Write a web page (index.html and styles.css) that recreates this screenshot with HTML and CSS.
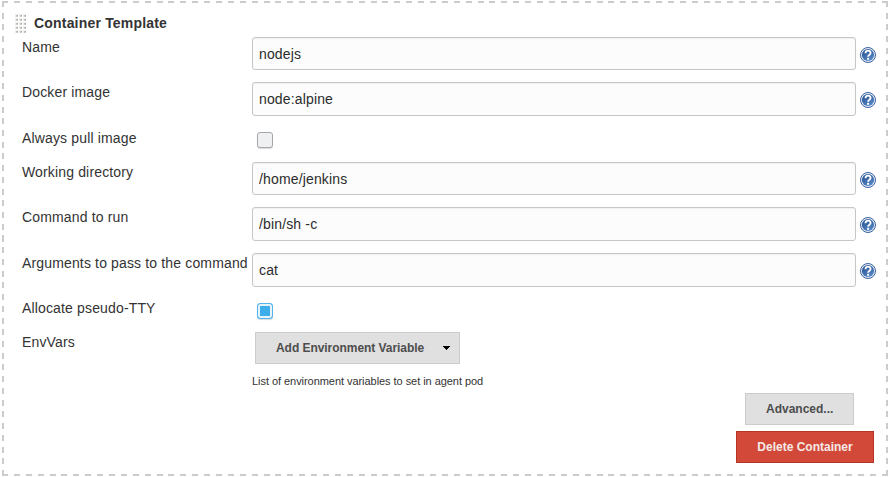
FILE: index.html
```html
<!DOCTYPE html>
<html lang="en">
<head>
<meta charset="utf-8">
<title>Container Template</title>
<link rel="stylesheet" href="styles.css">
</head>
<body>
<svg width="0" height="0" class="defs">
  <defs>
    <linearGradient id="ball" x1="0" y1="0" x2="0.5" y2="1">
      <stop offset="0" stop-color="#204a88"/>
      <stop offset="1" stop-color="#5585c4"/>
    </linearGradient>
    <symbol id="help" viewBox="0 0 16 16">
      <circle cx="8" cy="8" r="7.5" fill="#e8eef7" stroke="#3963a3" stroke-width="1"/>
      <circle cx="8" cy="8" r="6.1" fill="url(#ball)"/>
      <path d="M5.5 6.2C5.5 2.9 10.6 2.9 10.6 6C10.6 7.8 8.1 7.7 8.1 9.8" fill="none" stroke="#fff" stroke-width="1.8"/>
      <rect x="7.1" y="10.8" width="2" height="2" fill="#fff"/>
    </symbol>
  </defs>
</svg>
<form class="template">
  <header class="heading">
    <svg class="grip" width="12" height="19"><defs><pattern id="dots" width="4" height="4" patternUnits="userSpaceOnUse"><rect width="3" height="3" fill="#ecece9"/><rect x="1" y="1" width="2" height="2" fill="#cbcac6"/><rect x="2" y="1" width="1" height="1" fill="#a9a8a4"/></pattern></defs><rect width="12" height="19" fill="url(#dots)"/></svg>
    <b>Container Template</b>
  </header>
  <div class="row"><label>Name</label><input class="text" value="nodejs"><svg class="help"><use href="#help"/></svg></div>
  <div class="row mid"><label>Docker image</label><input class="text tall" value="node:alpine"><svg class="help"><use href="#help"/></svg></div>
  <div class="row short"><label>Always pull image</label><span class="check"></span></div>
  <div class="row"><label>Working directory</label><input class="text" value="/home/jenkins"><svg class="help"><use href="#help"/></svg></div>
  <div class="row mid"><label>Command to run</label><input class="text tall" value="/bin/sh -c"><svg class="help"><use href="#help"/></svg></div>
  <div class="row"><label>Arguments to pass to the command</label><input class="text tall" value="cat"><svg class="help"><use href="#help"/></svg></div>
  <div class="row short"><label>Allocate pseudo-TTY</label><span class="check checked"></span></div>
  <div class="row env"><label>EnvVars</label>
    <div><button type="button" class="btn add">Add Environment Variable<svg class="caret" width="7" height="4" shape-rendering="crispEdges"><path d="M0 0H7V1H6V2H5V3H4V4H3V3H2V2H1V1H0Z" fill="#000"/></svg></button>
    <p class="note">List of environment variables to set in agent pod</p></div>
  </div>
  <div class="actions">
    <button type="button" class="btn advanced">Advanced...</button>
    <button type="button" class="btn delete">Delete Container</button>
  </div>
</form>
</body>
</html>
```
FILE: styles.css
```css
* { box-sizing: border-box; }
body {
  margin: 0;
  background: #fff;
  color: #333;
  font: 14px/20px "Liberation Sans", Arial, sans-serif;
  letter-spacing: .15px;
}
.defs { display: block; }
.template {
  --dash-x: repeating-linear-gradient(90deg, #ccc 0 6px, transparent 6px 11.89px);
  --dash-y: repeating-linear-gradient(180deg, #ccc 0 6px, transparent 6px 11.725px);
  width: 886px;
  height: 475px;
  margin: 1px 0 0 2px;
  padding: 12px 14px 0 20px;
  background:
    var(--dash-x) top / 100% 2px no-repeat,
    var(--dash-x) bottom / 100% 2px no-repeat,
    var(--dash-y) left / 2px 100% no-repeat,
    var(--dash-y) right / 2px 100% no-repeat;
}
.heading {
  display: flex;
  height: 24px;
  margin-left: -7px;
  gap: 7px;
  letter-spacing: .19px;
}
.heading b { line-height: 20px; }
.grip { margin-top: 1px; }
.row {
  display: grid;
  grid-template-columns: 230px 604px 20px;
  height: 45px;
  align-items: start;
}
.row.mid { height: 46px; }
.row.short { height: 34px; }
.row.env { height: 61px; }
.row label { white-space: nowrap; }
.text {
  height: 33px;
  width: 100%;
  border: 1px solid #c6c6c6;
  border-radius: 3px;
  padding: 0 6px;
  background: #fcfcfc;
  box-shadow: inset 0 1px 1px rgba(0, 0, 0, .05);
  color: #2b2b2b;
  font: inherit;
  letter-spacing: inherit;
}
.text.tall { height: 34px; }
.help {
  width: 16px;
  height: 16px;
  margin: 10px 0 0 4px;
}
.check {
  width: 16px;
  height: 16px;
  margin: 4px 0 0 5px;
  border: 1px solid #a5a7aa;
  border-radius: 3px;
  background: #eff0f2;
  box-shadow: 0 1px 1px rgba(0, 0, 0, .15);
}
.checked {
  margin-top: 5px;
  border-color: #54b4ec;
  background: #3daee9;
  box-shadow: inset 0 0 0 2px #e6f3fb, 0 1px 1px rgba(0, 0, 0, .15);
}
.btn {
  height: 32px;
  border: 1px solid #ccc;
  padding: 0 20px;
  background: #e0e0e0;
  color: #4d4d4d;
  font: bold 12px/30px "Liberation Sans", Arial, sans-serif;
  white-space: nowrap;
}
.add {
  display: flex;
  align-items: center;
  justify-content: flex-start;
  width: 205px;
  margin-left: 3px;
  padding-right: 0;
  letter-spacing: -.05px;
}
.caret { flex: none; margin-left: 19px; }
.note {
  margin: 9px 0 0;
  font-size: 11px;
  line-height: 16px;
  letter-spacing: -.05px;
}
.actions {
  display: flex;
  flex-direction: column;
  align-items: flex-end;
  gap: 6px;
}
.advanced { width: 109px; margin-right: 20px; }
.delete {
  width: 138px;
  border-color: #b73527;
  background: #d24939;
  color: #f5e9e7;
}
```
